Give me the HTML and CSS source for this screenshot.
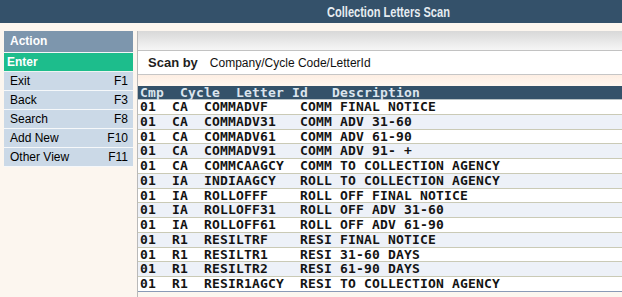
FILE: index.html
```html
<!DOCTYPE html>
<html>
<head>
    <title>Collection Letters Scan</title>
    <link rel="stylesheet" href="styles.css">
</head>
<body>
    <div class="titlebar">
        <span class="title">Collection Letters Scan</span>
    </div>
    <div class="layout">
        <div class="sidebar">
            <div class="side-head">Action</div>
            <div class="side-enter">Enter</div>
            <div class="side-item"><span>Exit</span><span>F1</span></div>
            <div class="side-item"><span>Back</span><span>F3</span></div>
            <div class="side-item"><span>Search</span><span>F8</span></div>
            <div class="side-item"><span>Add New</span><span>F10</span></div>
            <div class="side-item"><span>Other View</span><span>F11</span></div>
        </div>
        <div class="main">
            <div class="toolband"></div>
            <div class="scanrow">
                <span class="scan-label">Scan by</span>
                <span class="scan-value">Company/Cycle Code/LetterId</span>
            </div>
            <div class="spacer"></div>
            <div class="list-head">Cmp  Cycle  Letter Id   Description</div>
            <div class="list">
                <div class="row"><span>01</span><span>CA</span><span>COMMADVF</span><span>COMM</span><span>FINAL NOTICE</span></div>
                <div class="row"><span>01</span><span>CA</span><span>COMMADV31</span><span>COMM</span><span>ADV 31-60</span></div>
                <div class="row"><span>01</span><span>CA</span><span>COMMADV61</span><span>COMM</span><span>ADV 61-90</span></div>
                <div class="row"><span>01</span><span>CA</span><span>COMMADV91</span><span>COMM</span><span>ADV 91- +</span></div>
                <div class="row"><span>01</span><span>CA</span><span>COMMCAAGCY</span><span>COMM</span><span>TO COLLECTION AGENCY</span></div>
                <div class="row"><span>01</span><span>IA</span><span>INDIAAGCY</span><span>ROLL</span><span>TO COLLECTION AGENCY</span></div>
                <div class="row"><span>01</span><span>IA</span><span>ROLLOFFF</span><span>ROLL</span><span>OFF FINAL NOTICE</span></div>
                <div class="row"><span>01</span><span>IA</span><span>ROLLOFF31</span><span>ROLL</span><span>OFF ADV 31-60</span></div>
                <div class="row"><span>01</span><span>IA</span><span>ROLLOFF61</span><span>ROLL</span><span>OFF ADV 61-90</span></div>
                <div class="row"><span>01</span><span>R1</span><span>RESILTRF</span><span>RESI</span><span>FINAL NOTICE</span></div>
                <div class="row"><span>01</span><span>R1</span><span>RESILTR1</span><span>RESI</span><span>31-60 DAYS</span></div>
                <div class="row"><span>01</span><span>R1</span><span>RESILTR2</span><span>RESI</span><span>61-90 DAYS</span></div>
                <div class="row"><span>01</span><span>R1</span><span>RESIR1AGCY</span><span>RESI</span><span>TO COLLECTION AGENCY</span></div>
            </div>
        </div>
    </div>
</body>
</html>
```

FILE: styles.css
```css
body {
    margin: 0;
    background-color: #fcf6ef;
    font-family: 'Liberation Sans', Arial, sans-serif;
    color: #000;
    overflow: hidden;
}
.titlebar {
    height: 23px;
    background-color: #34516a;
    display: flex;
    align-items: center;
    padding-left: 327px;
}
.title {
    display: inline-block;
    font-weight: bold;
    font-size: 14px;
    color: #e6ecf1;
    transform: scaleX(0.79); /* narrow face, like Arial Narrow */
    transform-origin: left center;
    white-space: nowrap;
}
.layout {
    display: flex;
    padding-top: 8px;
    height: 266px;
}
.sidebar {
    width: 129px;
    margin-left: 4px;
}
.side-head {
    height: 21px;
    line-height: 21px;
    padding-left: 6px;
    background-color: #7d96ad;
    border-bottom: 1px solid #f4f6f8;
    color: #fff;
    font-weight: bold;
    font-size: 12px;
}
.side-enter {
    height: 18px;
    line-height: 18px;
    padding-left: 3px;
    background-color: #1dbd8c;
    border-bottom: 1px solid #eef4f2;
    color: #fff;
    font-weight: bold;
    font-size: 12px;
}
.side-item {
    display: flex;
    justify-content: space-between;
    height: 18px;
    line-height: 18px;
    padding: 0 5px 0 6px;
    background-color: #cbd9e7;
    border-bottom: 1px solid #f6f8fa;
    font-size: 12px;
}
.main {
    flex: 1;
    margin-left: 4px;
    border-left: 1px solid #b9b9b9;
}
.toolband {
    height: 19px;
    background: linear-gradient(#d8d8d8, #f6f6f6);
    border-bottom: 1px solid #c2c2c2;
}
.scanrow {
    display: flex;
    align-items: center;
    gap: 12px;
    height: 23px;
    padding-left: 10px;
    background-color: #fff;
    border-bottom: 1px solid #c6c6c6;
}
.scan-label {
    font-weight: bold;
    font-size: 13px;
    color: #1e1e1e;
}
.scan-value {
    font-size: 12px;
    color: #111;
}
.spacer {
    height: 11px;
    background: linear-gradient(#fdeee3, #fff8f1);
}
.list-head, .row {
    font-family: 'DejaVu Sans Mono', monospace;
    font-weight: bold;
    font-size: 13px;
    letter-spacing: 0.17px;
    padding-left: 2px;
}
.list-head {
    height: 13px;
    line-height: 13px;
    white-space: pre;
    background-color: #34526a;
    border-bottom: 1px solid #b9c3c6;
    color: #dce5ee;
}
.row {
    display: grid;
    grid-template-columns: 32px 32px 96px 40px auto;
    height: 13.75px;
    line-height: 14px;
    background-color: #fff;
    border-bottom: 1px solid #cacab6;
    color: #141414;
    white-space: pre;
}
.row:nth-child(even) {
    background-color: #edf1f8;
}
.row:last-child {
    border-bottom-color: #8a9ab6;
}
```
